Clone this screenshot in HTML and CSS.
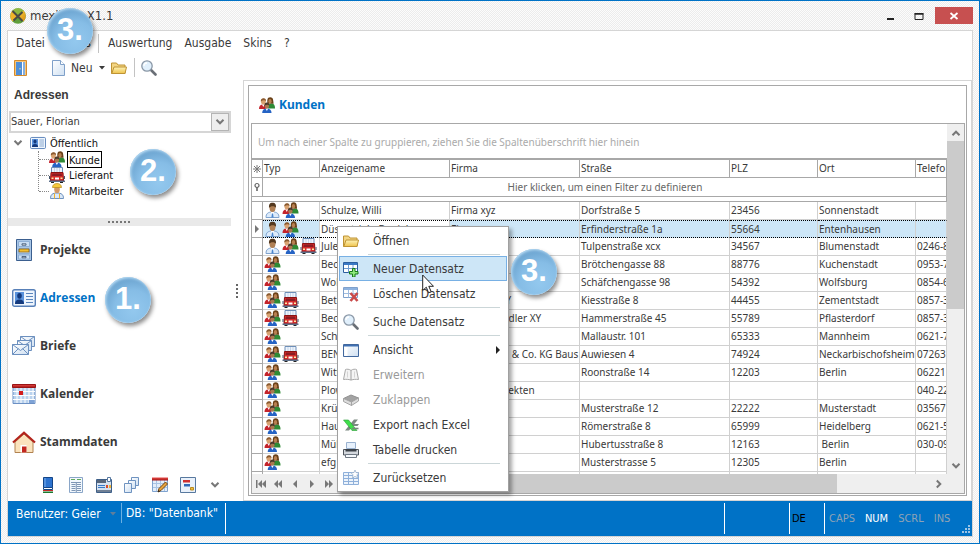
FILE: index.html
```html
<!doctype html>
<html lang="de">
<head>
  <meta charset="utf-8">
  <title>mexikon X1.1</title>
  <link rel="stylesheet" href="styles.css">
</head>
<body>
<svg class="defs" aria-hidden="true">
  <defs>
    <linearGradient id="g-globe" x1="0" y1="0" x2="1" y2="1"><stop offset="0" stop-color="#f7d23a"/><stop offset="1" stop-color="#d98a16"/></linearGradient>
    <linearGradient id="g-folder" x1="0" y1="0" x2="0" y2="1"><stop offset="0" stop-color="#fdf3b8"/><stop offset="1" stop-color="#efc34c"/></linearGradient>
    <linearGradient id="g-paper" x1="0" y1="0" x2="1" y2="1"><stop offset="0" stop-color="#ffffff"/><stop offset="1" stop-color="#cfe0f2"/></linearGradient>
    <linearGradient id="g-red" x1="0" y1="0" x2="0" y2="1"><stop offset="0" stop-color="#e84b48"/><stop offset="1" stop-color="#a31414"/></linearGradient>
  </defs>
  <symbol id="people" viewBox="0 0 16 16">
    <path d="M8.500 11c0-3 1.500-4.500 4-4.500s3.500 2 3.500 4.500v.6H8.500z" fill="#2f8a35"/>
    <path d="M8.300 6.500V3.200C8.500.8 9.800.2 11.300.2s2.900.8 2.900 3.200l.4 3.400z" fill="#6a4118"/>
    <ellipse cx="11" cy="4.300" rx="1.600" ry="2.200" fill="#b98052"/>
    <path d="M0 12c0-3 1.200-4.500 3.800-4.500S8 9 8 12z" fill="#c4232b"/>
    <path d="M3 7.600h2.600L4.300 10z" fill="#fff"/>
    <ellipse cx="4.400" cy="4.600" rx="2.400" ry="3" fill="#d9a270"/>
    <path d="M1.800 4.500C1.600 2 3 1.200 4.600 1.200S7.200 2 7 4.300C6 3 4 3 1.800 4.500z" fill="#8a5a30"/>
    <path d="M3.200 16c0-3 1.500-4.600 4.600-4.600s4.700 1.600 4.700 4.600z" fill="#2563c4"/>
    <path d="M6.500 11.500h2.800l-1.400 2.400z" fill="#fff"/>
    <ellipse cx="7.900" cy="8.800" rx="2.200" ry="2.700" fill="#a87a50"/>
    <path d="M5.400 9C5.200 6.300 6.400 5.400 7.900 5.400s2.700.9 2.500 3.400C9.400 7.400 6.800 7.400 5.400 9z" fill="#4c3a2c"/>
  </symbol>
  <symbol id="person" viewBox="0 0 16 16">
    <path d="M1.500 15.500c0-4 2-5.500 6.500-5.500s6.500 1.500 6.500 5.500z" fill="#dcebfb" stroke="#7fa3cf"/>
    <path d="M6 10h4l-2 2.500z" fill="#fff"/>
    <path d="M7.500 11.500h1l.6 4H6.900z" fill="#4a86cf"/>
    <ellipse cx="8" cy="5.800" rx="3" ry="4.200" fill="#b08055"/>
    <path d="M4.500 6C4.200 2 5.500.7 8 .7S11.800 2 11.500 6C10.500 3.600 6 3.600 4.500 6z" fill="#54391f"/>
  </symbol>
  <symbol id="truck" viewBox="0 0 16 16">
    <path d="M2.500.500h11v5h-11z" fill="#eef4fc" stroke="#6e8fb8"/>
    <path d="M5.500 1v4M8 1v4M10.500 1v4" stroke="#c4d5ea"/>
    <path d="M2 5.500h12l.5 8.500h-13z" fill="#d42a2a" stroke="#8a1212"/>
    <path d="M3.500 6.500h9l.5 2.500H3z" fill="#8a1d24"/>
    <path d="M6 10.500h4v2H6z" fill="#fff"/>
    <path d="M2.500 10.500h2v1.500h-2zM11.500 10.500h2v1.500h-2z" fill="#ffe9a0"/>
    <path d="M0 13.500h16V15H0z" fill="#5c6f8a"/>
    <path d="M0 9h1v3H0zM15 9h1v3h-1z" fill="#44566e"/>
    <path d="M2 15h3v1H2zM11 15h3v1h-3z" fill="#222"/>
  </symbol>
  <symbol id="worker" viewBox="0 0 16 16">
    <path d="M1.500 15.500c0-4 2-5.500 6.500-5.500s6.500 1.500 6.500 5.500z" fill="#dbe9f8" stroke="#6e92bf"/>
    <path d="M5.500 10.500v5M10.500 10.500v5" stroke="#f0b22a"/>
    <ellipse cx="8" cy="6.200" rx="2.800" ry="3.900" fill="#d39a68"/>
    <path d="M3.500 4.500h9c0-2.700-2-4-4.500-4s-4.500 1.300-4.500 4z" fill="#f7c93c" stroke="#b98a1a" stroke-width=".7"/>
  </symbol>
  <symbol id="card" viewBox="0 0 24 18">
    <rect x=".7" y=".7" width="22.600" height="16.600" rx="1.800" fill="#eef5fd" stroke="#5880b8" stroke-width="1.400"/>
    <path d="M3 3h9v12H3z" fill="#5b93dc"/>
    <ellipse cx="7.500" cy="6.800" rx="2.300" ry="2.900" fill="#14397c"/>
    <path d="M3 15c0-3 1.500-4.500 4.500-4.500S12 12 12 15z" fill="#14397c"/>
    <path d="M14 4.500h7M14 7.500h7M14 10.500h7M14 13.500h7" stroke="#5c86bd"/>
  </symbol>
  <symbol id="cabinet" viewBox="0 0 16 22">
    <path d="M.5.500h15v21H.5z" fill="#a9c6e6" stroke="#3b5f8f"/>
    <path d="M2.500 2.500h11v5h-11zM2.500 9.500h11v5h-11zM2.500 16h11v4h-11z" fill="#c9def4" stroke="#8fb0d6"/>
    <path d="M3 10h10v3H3z" fill="#f3bf2e" stroke="#8a641a" stroke-width=".8"/>
    <path d="M6 6.200V4.800h4v1.400zM6 18.800v-1.300h4v1.300z" fill="#fff" stroke="#2c4568" stroke-width=".8"/>
  </symbol>
  <symbol id="letters" viewBox="0 0 24 20">
    <g fill="url(#g-paper)" stroke="#6c90bf">
      <path d="M8.500.500h14v10h-14z"/><path d="M8.500.500l7 5 7-5" fill="none"/>
      <path d="M5.500 4.500h14v10h-14z"/><path d="M5.500 4.500l7 5 7-5" fill="none"/>
      <path d="M.5 8.500h16v10H.5z"/><path d="M.5 18.500l6-6M16.500 18.500l-6-6M.5 8.500l8 6 8-6" fill="none"/>
    </g>
  </symbol>
  <symbol id="calendar" viewBox="0 0 24 20">
    <path d="M1 3h22v16.500H1z" fill="#b9d2ee" stroke="#6c90c4"/>
    <path d="M5 4v15M9 4v15M13 4v15M17 4v15M21 4v15M1 7.500h22M1 11.500h22M1 15.500h22" stroke="#fff"/>
    <path d="M17 16h5v3h-5z" fill="#7fa3d6"/>
    <path d="M.5.500h23v3H.5z" fill="url(#g-red)" stroke="#9b1515"/>
    <path d="M7 7h4v4H7z" fill="#d31d1d"/>
  </symbol>
  <symbol id="house" viewBox="0 0 24 22">
    <path d="M3 11l9-8 9 8v10.500H3z" fill="#fbe3bd" stroke="#b18250"/>
    <path d="M1 11.500L12 1.700l11 9.800" fill="none" stroke="#b3241c" stroke-width="2.200"/>
    <path d="M8.500 21.500v-7.500h6v7.500z" fill="#fff"/>
    <path d="M10 21.500V15.500h4.500v6z" fill="#c2271f"/>
  </symbol>
  <symbol id="folder" viewBox="0 0 16 16">
    <path d="M.5 13.500v-10.500h5l1.500 2h7v8.500z" fill="#f3d583" stroke="#bf9434"/>
    <path d="M.8 13.500l2.200-6.500h12.500l-1.500 6.500z" fill="url(#g-folder)" stroke="#bf9434"/>
  </symbol>
  <symbol id="lens" viewBox="0 0 16 16">
    <path d="M9.500 9.500l5 5" stroke="#6a6f76" stroke-width="2.600" stroke-linecap="round"/>
    <circle cx="6" cy="6" r="5.200" fill="#e1f0fc" stroke="#8a97a6" stroke-width="1.300"/>
    <path d="M3 6a3 3 0 0 1 3-3" fill="none" stroke="#fff" stroke-width="1.300"/>
  </symbol>
  <symbol id="door" viewBox="0 0 13 16">
    <path d="M.5.500h12v15H.5z" fill="#f6c478" stroke="#d58b2b"/>
    <path d="M2 2h9v13H2z" fill="#4f8fd8"/>
    <path d="M8 2h1v13H8z" fill="#fff"/>
    <path d="M9 2h2v13H9z" fill="#83aee0"/>
    <path d="M5.500 8h1v1.500h-1z" fill="#ffe48a"/>
  </symbol>
  <symbol id="page" viewBox="0 0 13 16">
    <path d="M.5.500h8l4 4v11H.5z" fill="url(#g-paper)" stroke="#7fa0c9"/>
    <path d="M8.500.500v4h4" fill="#fff" stroke="#7fa0c9"/>
  </symbol>
  <symbol id="grid-add" viewBox="0 0 16 16">
    <path d="M.5 1.500h14v10H.5z" fill="#fff" stroke="#2d5f9f"/><path d="M1 2h13v2H1z" fill="#3a79c4"/>
    <path d="M1 7.500h13M5.500 4v7.500M10 4v7.500" stroke="#6e9bd0"/>
    <path d="M9.500 7.500h2.500v3h3v2.500h-3v3H9.500v-3h-3v-2.500h3z" fill="#8fe87c" stroke="#167a16"/>
  </symbol>
  <symbol id="grid-del" viewBox="0 0 16 16">
    <path d="M.5 1.500h14v10H.5z" fill="#fff" stroke="#7fa1cc"/><path d="M1 2h13v2H1z" fill="#8db2df"/>
    <path d="M1 7.500h13M5.500 4v7.500M10 4v7.500" stroke="#9fbde0"/>
    <path d="M7.500 7l7 8M14.500 7l-7 8" stroke="#c94a4a" stroke-width="2.600"/>
  </symbol>
  <symbol id="grid-new" viewBox="0 0 16 16">
    <path d="M.5 2.500h15v12H.5z" fill="#edf4fc" stroke="#8fb0da"/>
    <path d="M1 5.500h14M1 8.500h14M1 11.500h14M5.500 3v11M10.500 3v11" stroke="#8fb0da"/>
    <path d="M12 0l1 2.500 3 .3-2 2 .6 3-2.600-1.400-2.600 1.400.6-3-2-2 3-.3z" fill="#fff" stroke="#8fa9c6" stroke-width=".7"/>
  </symbol>
  <symbol id="view" viewBox="0 0 16 16">
    <path d="M.5 2.500h15v12H.5z" fill="url(#g-paper)" stroke="#41689e"/><path d="M1 3h14v1.500H1z" fill="#3f70b3"/>
    <path d="M1.500 5h3v9h-3z" fill="#fff"/>
  </symbol>
  <symbol id="book-open" viewBox="0 0 16 16">
    <path d="M8 3.500C6.500 2 3.500 2 2.500 2.500L.5 12.500c2.500-.3 5-.3 7.500.6 2.500-.9 5-.9 7.500-.6L13.500 2.500C12.500 2 9.500 2 8 3.500z" fill="#f4f4f4" stroke="#a9a9a9"/>
    <path d="M8 3.500v9.500" stroke="#a0a0a0"/>
    <path d="M4.500 4.500v6M11.500 4.500v6" stroke="#d5d5d5"/>
  </symbol>
  <symbol id="book-shut" viewBox="0 0 16 16">
    <path d="M.5 6.500L8 3l7.500 3-7 4z" fill="#a3a3a3" stroke="#8f8f8f"/>
    <path d="M.5 6.500v3l8 4v-3.500zM15.500 6v3l-7 4.500v-3.500z" fill="#ddd" stroke="#a5a5a5"/>
  </symbol>
  <symbol id="excel" viewBox="0 0 16 16">
    <path d="M15 2.500H11L2 13.500h4z" fill="#7d8a82"/><path d="M9 7h7l-1.500 2H9z" fill="#7d8a82"/>
    <path d="M.5 3h5l8.500 10.500H9z" fill="#3fe04b" stroke="#2a9a36" stroke-width=".6"/>
    <path d="M9 11.500h6.500" stroke="#78877c" stroke-width="1.600"/>
  </symbol>
  <symbol id="printer" viewBox="0 0 16 16">
    <path d="M3.500.500h9v6h-9z" fill="#e7f1fc" stroke="#9ab2d0"/>
    <path d="M.5 7.500h15v5.500H.5z" fill="#d4d8de" stroke="#4f555d"/><path d="M2.500 7h11v2.500h-11z" fill="#3a4047"/>
    <path d="M2.500 12.500h11v3h-11z" fill="#f6f9fd" stroke="#707984"/>
  </symbol>
  <symbol id="book" viewBox="0 0 16 16">
    <path d="M3.500.500h9v10h-9z" fill="#2d73cf" stroke="#134587"/><path d="M5 1v9" stroke="#7db0ee"/>
    <path d="M3.500 10.500h9v2h-9z" fill="#fff" stroke="#134587"/>
    <path d="M3 13h10v1H3z" fill="#c12a2a"/><path d="M3 14.500h10V16H3z" fill="#1c7a30"/>
  </symbol>
  <symbol id="form" viewBox="0 0 16 16">
    <path d="M1.500.500h13v15h-13z" fill="#f3f8fd" stroke="#8aa6c8"/>
    <path d="M3 2.500h4M9 2.500h4" stroke="#62a95e"/><path d="M3 5.500h10M3.500 7.500h4M9 7.500h4M3.500 9.500h4M9 9.500h4M3.500 11.500h4M9 11.500h4M3.500 13.500h4M9 13.500h4M8.300 5v10" stroke="#7f97b5"/>
  </symbol>
  <symbol id="register" viewBox="0 0 16 16">
    <path d="M.5 2.500h15v13H.5z" fill="#d4e1f0" stroke="#3e5f88"/><path d="M1 3h9v3H1z" fill="#56657a"/>
    <path d="M11.500.500h3v4h-3z" fill="#fff" stroke="#55779f"/>
    <path d="M2 8.500h7M2 10.500h7" stroke="#3979c8"/><path d="M10 8h2v3h-2z" fill="#d54a2e"/><path d="M13 8h2v3h-2z" fill="#edb43a"/>
    <path d="M1 13h14v2H1z" fill="#6f7f94"/>
  </symbol>
  <symbol id="stack" viewBox="0 0 16 16">
    <g fill="url(#g-paper)" stroke="#6f93c0">
      <path d="M7.500.500h7v8h-7z"/><path d="M4.500 3.500h7v8h-7z"/><path d="M.5 6.500h7v9h-7z"/>
    </g>
  </symbol>
  <symbol id="plan" viewBox="0 0 16 16">
    <path d="M.5 2.500h15v12H.5z" fill="#e4eefa" stroke="#7fa3cf"/><path d="M4.500 3v11M8.500 3v11M12.500 3v11M1 6.500h14M1 10.500h14" stroke="#a9c4e4"/>
    <path d="M0 .5h16v3H0z" fill="url(#g-red)"/>
    <path d="M6 15l1-3.500L13.500 5l2 2L9 13.500z" fill="#e7a33c" stroke="#6f4310"/><path d="M6 15l.6-2 1.400 1.400z" fill="#222"/>
  </symbol>
  <symbol id="sheet" viewBox="0 0 16 16">
    <path d="M.5.500h15v15H.5z" fill="#e9f1fb" stroke="#58799f"/><path d="M3 3h7v2.500H3z" fill="#cf2f2f"/><path d="M4 7h6v2.500H4z" fill="#2e68b8"/><path d="M10.500 10.500h3v2.500h-3z" fill="#f0bd3a" stroke="#b88a20"/>
  </symbol>
  <symbol id="down" viewBox="0 0 10 10"><path d="M1.500 2.800L5 6.300l3.500-3.500" fill="none" stroke="currentColor" stroke-width="2"/></symbol>
  <symbol id="up" viewBox="0 0 10 10"><path d="M1.500 7.200L5 3.700l3.500 3.500" fill="none" stroke="currentColor" stroke-width="2"/></symbol>
  <symbol id="right" viewBox="0 0 10 10"><path d="M2.800 1.500L6.300 5 2.800 8.500" fill="none" stroke="currentColor" stroke-width="2"/></symbol>
  <symbol id="play" viewBox="0 0 10 10"><path d="M3 1l4 4-4 4z" fill="currentColor"/></symbol>
  <symbol id="caret" viewBox="0 0 6 4"><path d="M0 0h6L3 3.500z" fill="currentColor"/></symbol>
</svg>

<div class="window">
  <header class="titlebar">
    <svg class="logo" viewBox="0 0 16 16"><circle cx="8" cy="8" r="7.800" fill="#5f9e3a"/><path d="M8 8L2.500 2.500A7.800 7.800 0 0 1 13.500 2.500z" fill="#8db83f"/><path d="M8 8l5.500-5.500a7.800 7.800 0 0 1 0 11z" fill="url(#g-globe)"/><path d="M8 8L2.500 2.500a7.800 7.800 0 0 0 0 11z" fill="#f0b429"/><path d="M2.500 3l10 10M3.500 12.500L12.500 4" stroke="#4a4a44" stroke-width="2"/></svg>
    <span class="caption">mexikon&nbsp; X1.1</span>
    <button class="win-btn" aria-label="Minimieren"><svg viewBox="0 0 10 10"><path d="M1 7h7v2H1z" fill="#222"/></svg></button>
    <button class="win-btn" aria-label="Maximieren"><svg viewBox="0 0 10 10"><path d="M1 2.500h8v6H1zM1 3h8" fill="none" stroke="#222"/><path d="M.5 2h9v1.500h-9z" fill="#222"/></svg></button>
    <button class="win-btn close" aria-label="Schließen"><svg viewBox="0 0 10 10"><path d="M1.500 2l7 6M8.500 2l-7 6" stroke="#fff" stroke-width="1.800"/></svg></button>
  </header>

  <div class="frame">
    <nav class="menubar">
      <button>Datei</button><button>Extras</button><span class="vline"></span>
      <button>Auswertung</button><button>Ausgabe</button><button>Skins</button><button>?</button>
    </nav>
    <div class="toolbar">
      <button class="exit" aria-label="Beenden"><svg class="narrow"><use href="#door"/></svg></button>
      <button class="new"><svg class="narrow"><use href="#page"/></svg>Neu<svg class="caret"><use href="#caret"/></svg></button>
      <button aria-label="Öffnen"><svg class="icon"><use href="#folder"/></svg></button>
      <span class="vline"></span>
      <button aria-label="Suchen"><svg class="icon"><use href="#lens"/></svg></button>
    </div>

    <div class="work">
      <aside class="side">
        <h2>Adressen</h2>
        <div class="combo">
          <select aria-label="Benutzer"><option>Sauer, Florian</option></select>
          <span class="combo-arrow"><svg class="glyph"><use href="#down"/></svg></span>
        </div>
        <ul class="tree">
          <li class="root"><svg class="glyph"><use href="#down"/></svg><svg class="icon card"><use href="#card"/></svg><span>Öffentlich</span></li>
          <li><svg class="icon"><use href="#people"/></svg><span class="focus">Kunde</span></li>
          <li><svg class="icon"><use href="#truck"/></svg><span>Lieferant</span></li>
          <li><svg class="icon"><use href="#worker"/></svg><span>Mitarbeiter</span></li>
        </ul>
        <div class="splitter"></div>
        <nav class="modules">
          <a href="#"><svg><use href="#cabinet"/></svg>Projekte</a>
          <a href="#" class="active"><svg><use href="#card"/></svg>Adressen</a>
          <a href="#"><svg><use href="#letters"/></svg>Briefe</a>
          <a href="#"><svg><use href="#calendar"/></svg>Kalender</a>
          <a href="#"><svg><use href="#house"/></svg>Stammdaten</a>
        </nav>
        <div class="shortcuts">
          <button aria-label="Buch"><svg class="icon"><use href="#book"/></svg></button>
          <button aria-label="Formular"><svg class="icon"><use href="#form"/></svg></button>
          <button aria-label="Kasse"><svg class="icon"><use href="#register"/></svg></button>
          <button aria-label="Kopien"><svg class="icon"><use href="#stack"/></svg></button>
          <button aria-label="Planer"><svg class="icon"><use href="#plan"/></svg></button>
          <button aria-label="Blatt"><svg class="icon"><use href="#sheet"/></svg></button>
          <button aria-label="Mehr"><svg class="glyph"><use href="#down"/></svg></button>
        </div>
      </aside>
      <div class="side-grip"></div>

      <main class="panel">
        <section class="box">
          <h1><svg class="icon"><use href="#people"/></svg>Kunden</h1>
          <div class="grid">
            <div class="grid-main">
              <div class="grid-view">
                <p class="group-hint">Um nach einer Spalte zu gruppieren, ziehen Sie die Spaltenüberschrift hier hinein</p>
                <table>
                  <colgroup><col class="c-ind"><col class="c-typ"><col class="c-name"><col class="c-firma"><col class="c-str"><col class="c-plz"><col class="c-ort"><col></colgroup>
                  <thead>
                    <tr><th class="ind"><svg class="glyph" viewBox="0 0 10 10"><path d="M5 1v8M1 5h8M2 2l6 6M8 2L2 8" stroke="#777"/></svg></th><th>Typ</th><th>Anzeigename</th><th>Firma</th><th>Straße</th><th>PLZ</th><th>Ort</th><th>Telefo</th></tr>
                    <tr class="filter"><td class="ind"><svg class="glyph" viewBox="0 0 10 10"><circle cx="5" cy="3.500" r="2" fill="none" stroke="#666" stroke-width="1.200"/><path d="M5 5v4" stroke="#666" stroke-width="1.600"/></svg></td><td colspan="7">Hier klicken, um einen Filter zu definieren</td></tr>
                    <tr class="gap"><td colspan="8"></td></tr>
                  </thead>
                  <tbody>
                    <tr><td></td><td><svg class="icon"><use href="#person"/></svg><svg class="icon"><use href="#people"/></svg></td><td>Schulze, Willi</td><td>Firma xyz</td><td>Dorfstraße 5</td><td>23456</td><td>Sonnenstadt</td><td></td></tr>
                    <tr class="selected"><td><svg class="glyph"><use href="#play"/></svg></td><td><svg class="icon"><use href="#person"/></svg><svg class="icon"><use href="#people"/></svg></td><td>Düsentrieb, Daniel</td><td>Firma</td><td>Erfinderstraße 1a</td><td>55664</td><td>Entenhausen</td><td></td></tr>
                    <tr><td></td><td><svg class="icon"><use href="#person"/></svg><svg class="icon"><use href="#people"/></svg><svg class="icon"><use href="#truck"/></svg></td><td>Jules</td><td></td><td>Tulpenstraße xcx</td><td>34567</td><td>Blumenstadt</td><td>0246-8</td></tr>
                    <tr><td></td><td><svg class="icon"><use href="#people"/></svg></td><td>Becker</td><td></td><td>Brötchengasse 88</td><td>88776</td><td>Kuchenstadt</td><td>0953-7</td></tr>
                    <tr><td></td><td><svg class="icon"><use href="#people"/></svg></td><td>Wolf</td><td></td><td>Schäfchengasse 98</td><td>54392</td><td>Wolfsburg</td><td>0854-6</td></tr>
                    <tr><td></td><td><svg class="icon"><use href="#people"/></svg><svg class="icon"><use href="#truck"/></svg></td><td>Beton</td><td>Betonbau XY</td><td>Kiesstraße 8</td><td>44455</td><td>Zementstadt</td><td>0857-3</td></tr>
                    <tr><td></td><td><svg class="icon"><use href="#people"/></svg><svg class="icon"><use href="#truck"/></svg></td><td>Becker</td><td>Baustoffhändler XY</td><td>Hammerstraße 45</td><td>55789</td><td>Pflasterdorf</td><td>0857-3</td></tr>
                    <tr><td></td><td><svg class="icon"><use href="#people"/></svg></td><td>Schmidt</td><td></td><td>Mallaustr. 101</td><td>65333</td><td>Mannheim</td><td>0621-7</td></tr>
                    <tr><td></td><td><svg class="icon"><use href="#people"/></svg><svg class="icon"><use href="#truck"/></svg></td><td>BENZ</td><td>BENZ GmbH &amp; Co. KG Baus</td><td>Auwiesen 4</td><td>74924</td><td>Neckarbischofsheim</td><td>07263</td></tr>
                    <tr><td></td><td><svg class="icon"><use href="#people"/></svg></td><td>Witt</td><td></td><td>Roonstraße 14</td><td>12203</td><td>Berlin</td><td>06221</td></tr>
                    <tr><td></td><td><svg class="icon"><use href="#people"/></svg></td><td>Plow</td><td>Plows Architekten</td><td></td><td></td><td></td><td>040-22</td></tr>
                    <tr><td></td><td><svg class="icon"><use href="#people"/></svg></td><td>Krüger</td><td></td><td>Musterstraße 12</td><td>22222</td><td>Musterstadt</td><td>03567</td></tr>
                    <tr><td></td><td><svg class="icon"><use href="#people"/></svg></td><td>Hauser</td><td></td><td>Römerstraße 8</td><td>65999</td><td>Heidelberg</td><td>0621-5</td></tr>
                    <tr><td></td><td><svg class="icon"><use href="#people"/></svg></td><td>Müller</td><td></td><td>Hubertusstraße 8</td><td>12163</td><td>&nbsp;Berlin</td><td>030-09</td></tr>
                    <tr><td></td><td><svg class="icon"><use href="#people"/></svg></td><td>efg</td><td></td><td>Musterstrasse 5</td><td>12305</td><td>Berlin</td><td></td></tr>
                    <tr><td></td><td></td><td></td><td></td><td></td><td></td><td></td><td></td></tr>
                  </tbody>
                </table>
              </div>
              <div class="vscroll">
                <button aria-label="Nach oben"><svg class="glyph"><use href="#up"/></svg></button>
                <div class="thumb"></div>
                <button aria-label="Nach unten"><svg class="glyph"><use href="#down"/></svg></button>
              </div>
            </div>
            <div class="navigator">
              <button aria-label="Erster"><svg viewBox="0 0 10 10"><path d="M0 1h1.500v8H0zM6 1v8L2 5zM10 1v8L6 5z" fill="#777"/></svg></button>
              <button aria-label="Seite zurück"><svg viewBox="0 0 10 10"><path d="M5 1v8L1 5zM9 1v8L5 5z" fill="#777"/></svg></button>
              <button aria-label="Zurück"><svg viewBox="0 0 10 10"><path d="M7 1v8L3 5z" fill="#777"/></svg></button>
              <button aria-label="Weiter"><svg viewBox="0 0 10 10"><path d="M3 1v8l4-4z" fill="#777"/></svg></button>
              <button aria-label="Seite vor"><svg viewBox="0 0 10 10"><path d="M1 1v8l4-4zM5 1v8l4-4z" fill="#777"/></svg></button>
              <div class="hscroll"><div class="thumb"></div><button aria-label="Nach rechts"><svg class="glyph"><use href="#right"/></svg></button></div>
            </div>
          </div>
        </section>
      </main>
    </div>

    <footer class="status">
      <div class="user"><span>Benutzer: Geier</span><svg class="caret"><use href="#caret"/></svg></div>
      <div class="db">DB: "Datenbank"</div>
      <div class="fill"></div>
      <div class="cell"></div>
      <div class="lang">DE</div>
      <div class="keys"><span>CAPS</span><span class="on">NUM</span><span>SCRL</span><span>INS</span></div>
      <svg class="sizer" viewBox="0 0 9 9"><path d="M7 1h2M4 4h2M7 4h2M1 7h2M4 7h2M7 7h2" stroke="#9cc4e6" stroke-width="2"/></svg>
    </footer>
  </div>
</div>

<div class="context">
  <button><svg class="icon"><use href="#folder"/></svg>Öffnen</button>
  <hr>
  <button class="hot"><svg class="icon"><use href="#grid-add"/></svg>Neuer Datensatz</button>
  <button><svg class="icon"><use href="#grid-del"/></svg>Löschen Datensatz</button>
  <hr>
  <button><svg class="icon"><use href="#lens"/></svg>Suche Datensatz</button>
  <hr>
  <button><svg class="icon"><use href="#view"/></svg>Ansicht<svg class="glyph sub"><use href="#play"/></svg></button>
  <button disabled><svg class="icon"><use href="#book-open"/></svg>Erweitern</button>
  <button disabled><svg class="icon"><use href="#book-shut"/></svg>Zuklappen</button>
  <button><svg class="icon"><use href="#excel"/></svg>Export nach Excel</button>
  <button><svg class="icon"><use href="#printer"/></svg>Tabelle drucken</button>
  <hr>
  <button><svg class="icon"><use href="#grid-new"/></svg>Zurücksetzen</button>
</div>
<svg class="pointer" viewBox="0 0 12 20"><path d="M.7 1v15.500l3.600-3.300 2.300 5.600 2.600-1.100-2.400-5.400h4.700z" fill="#fff" stroke="#222"/></svg>

<span class="badge step-menu">3.</span>
<span class="badge step-tree">2.</span>
<span class="badge step-module">1.</span>
<span class="badge step-context">3.</span>
</body>
</html>
```
FILE: styles.css
```css
* {
  box-sizing: border-box;
}
body {
  margin: 0;
  background: #fff;
  color: #3a3a3a;
  font: 11px/16px "DejaVu Sans Condensed", "Noto Sans", sans-serif;
}
button {
  display: flex;
  align-items: center;
  margin: 0;
  padding: 0;
  border: 0;
  background: none;
  color: inherit;
  font: inherit;
}
h1, h2, p, ul {
  margin: 0;
  padding: 0;
}
svg {
  display: block;
  flex: none;
}
.defs {
  position: absolute;
  width: 0;
  height: 0;
}
.icon {
  width: 16px;
  height: 16px;
}
.glyph {
  width: 10px;
  height: 10px;
  color: #777;
}
.narrow {
  width: 13px;
  height: 16px;
}
.caret {
  width: 6px;
  height: 4px;
}
.vline {
  width: 1px;
  height: 19px;
  background: #c3c3c3;
}

/* window */
.window {
  display: flex;
  flex-direction: column;
  height: 100vh;
  padding: 0 6px 6px;
  border: 1px solid #0072c6;
  background: conic-gradient(#ececec 25%, #fcfcfc 0 50%, #ececec 0 75%, #fcfcfc 0) 0 0 / 2px 2px;
}
.titlebar {
  display: flex;
  align-items: center;
  height: 29px;
  padding-left: 3px;
}
.logo {
  width: 16px;
  height: 16px;
}
.caption {
  flex: 1;
  padding-left: 4px;
  font-size: 13px;
}
.win-btn {
  justify-content: center;
  width: 28px;
  height: 17px;
}
.win-btn svg {
  width: 10px;
  height: 10px;
}
.close {
  width: 38px;
  margin-left: 2px;
  background: #c75050;
}
.frame {
  display: flex;
  flex: 1;
  flex-direction: column;
  min-height: 0;
  border: 1px solid #d5d5d5;
  background: #fff;
}
.menubar, .toolbar {
  display: flex;
  align-items: center;
  height: 24px;
  font-size: 12px;
}
.menubar {
  gap: 12px;
  padding-left: 8px;
}
.menubar .vline {
  margin: 0 -3px 0 -5px;
}
.toolbar {
  height: 25px;
  padding-left: 6px;
}
.new {
  margin: 0 6px 0 25px;
}
.new .narrow {
  margin-right: 6px;
}
.new .caret {
  margin-left: 6px;
}
.toolbar .vline {
  margin: 0 6px 0 7px;
}
.work {
  display: flex;
  flex: 1;
  min-height: 0;
}

/* left side */
.side {
  display: flex;
  flex-direction: column;
  width: 223px;
}
.side h2 {
  padding: 7px 6px 0;
  font: bold 12px/16px "Liberation Sans", Arial, sans-serif;
}
.combo {
  display: flex;
  height: 22px;
  margin: 8px 0 2px 1px;
  border: 2px solid #d6d6d6;
}
.combo select {
  flex: 1;
  padding: 0;
  border: 0;
  appearance: none;
  background: #fff;
  color: #3a3a3a;
  font: inherit;
}
.combo-arrow {
  display: flex;
  align-items: center;
  justify-content: center;
  width: 18px;
  border: 1px solid #b4b4b4;
  background: #eee;
}
.tree {
  position: relative;
  list-style: none;
  color: #111;
}
.tree::before {
  content: "";
  position: absolute;
  top: 16px;
  left: 30px;
  height: 40px;
  border-left: 1px dotted #888;
}
.tree li {
  display: flex;
  align-items: center;
  height: 16px;
  padding-left: 41px;
}
.tree li::before {
  content: "";
  width: 10px;
  margin-left: -10px;
  border-top: 1px dotted #888;
}
.tree .root {
  padding-left: 5px;
}
.tree .root::before {
  display: none;
}
.tree .card {
  margin: 0 2px 0 7px;
}
.tree span {
  padding: 2px 2px 0;
}
.tree li + li span {
  margin-left: 2px;
}
.tree .focus {
  outline: 1px solid #000;
  outline-offset: -1px;
  line-height: 15px;
}
.splitter {
  display: flex;
  align-items: center;
  justify-content: center;
  height: 8px;
  margin-top: 19px;
  background: #e9e9e9;
}
.splitter::before {
  content: "";
  width: 23px;
  height: 2px;
  background: repeating-linear-gradient(90deg, #777 0 2px, transparent 2px 4px);
}
.modules a {
  display: flex;
  align-items: center;
  gap: 4px;
  height: 48px;
  padding-left: 4px;
  color: #3a3a3a;
  font: bold 12px/16px "Open Sans", "Noto Sans", sans-serif;
  text-decoration: none;
}
.modules svg {
  width: 24px;
  height: 22px;
}
.modules .active {
  color: #0072c6;
}
.shortcuts {
  display: flex;
  gap: 12px;
  margin: auto 0 8px;
  padding-left: 32px;
}
.shortcuts .glyph {
  margin-left: 2px;
}
.side-grip {
  display: flex;
  align-items: center;
  justify-content: center;
  width: 12px;
}
.side-grip::before {
  content: "";
  width: 2px;
  height: 14px;
  background: repeating-linear-gradient(#666 0 2px, transparent 2px 4px);
}

/* record grid */
.panel {
  display: flex;
  flex: 1;
  min-width: 0;
  padding: 4px;
  border: 1px solid #d5d5d5;
}
.box {
  display: flex;
  flex: 1;
  flex-direction: column;
  min-width: 0;
  padding: 0 1px 1px 2px;
  border: 1px solid #a8a8a8;
}
.box h1 {
  display: flex;
  align-items: center;
  gap: 4px;
  height: 37px;
  padding-left: 8px;
  color: #0072c6;
  font: bold 12px/16px "Noto Sans", sans-serif;
}
.grid {
  display: flex;
  flex: 1;
  flex-direction: column;
  min-height: 0;
  border: 1px solid #a8a8a8;
  font-family: "Noto Sans", sans-serif;
  font-size: 10px;
}
.grid-main {
  display: flex;
  flex: 1;
  min-height: 0;
}
.grid-view {
  flex: 1;
  min-width: 0;
  overflow: hidden;
}
.group-hint {
  height: 36px;
  padding: 10px 6px 0;
  border-bottom: 2px solid #a8a8a8;
  color: #aaa;
}
table {
  width: 100%;
  table-layout: fixed;
  border-spacing: 0;
}
.c-ind { width: 11px; }
.c-typ { width: 57px; }
.c-name, .c-firma { width: 130px; }
.c-str { width: 150px; }
.c-plz { width: 88px; }
.c-ort { width: 98px; }
th, td {
  height: 18px;
  padding: 0 0 0 1px;
  overflow: hidden;
  border-right: 1px solid #d0d0d0;
  border-bottom: 1px solid #d0d0d0;
  font-weight: normal;
  line-height: 17px;
  text-align: left;
  white-space: nowrap;
}
th, .filter td, .gap td {
  border-color: #a8a8a8;
}
.filter td {
  height: 19px;
  color: #666;
  text-align: center;
}
.gap td {
  height: 5px;
}
tbody td:first-child {
  border-color: #a8a8a8;
}
td:first-child, th.ind {
  padding: 0;
}
td .icon {
  display: inline-block;
  width: 17px;
  height: 16px;
  margin-right: 1px;
  vertical-align: top;
}
.selected td + td {
  border-top: 1px dotted #000;
  border-bottom: 1px dotted #000;
  background: #cde6f7;
  line-height: 16px;
}
.selected td:nth-child(3) {
  background: #fff;
}
.vscroll {
  display: flex;
  flex-direction: column;
  width: 17px;
  background: #efefef;
}
.vscroll button, .hscroll button {
  justify-content: center;
  width: 17px;
  height: 17px;
}
.vscroll .thumb {
  height: 48%;
  margin-bottom: auto;
  background: #cbcbcb;
}
.navigator {
  display: flex;
  height: 19px;
  background: #efefef;
}
.navigator > button {
  justify-content: center;
  width: 17px;
}
.navigator > button > svg {
  width: 10px;
  height: 10px;
}
.hscroll {
  display: flex;
  flex: 1;
  align-items: center;
  justify-content: space-between;
  padding-right: 17px;
}
.hscroll .thumb {
  width: 82%;
  height: 100%;
  background: #cbcbcb;
}

/* status bar */
.status {
  display: flex;
  align-items: stretch;
  height: 35px;
  padding: 2px 2px 2px 8px;
  background: #0072c6;
  color: #fff;
}
.status > div {
  border-right: 1px solid #fff;
}
.user, .db {
  padding-top: 2px;
  font-size: 12px;
}
.status .user {
  display: flex;
  align-items: center;
  justify-content: space-between;
  width: 106px;
  height: 20px;
  padding: 2px 5px 0 0;
  border-color: #6bb0e2;
}
.user .caret {
  color: #5f7f9c;
}
.db {
  width: 104px;
  padding-left: 4px;
}
.fill {
  flex: 1;
}
.cell {
  width: 65px;
}
.lang {
  width: 35px;
  padding: 8px 2px;
  color: #000;
}
.status .keys {
  display: flex;
  gap: 10px;
  width: 136px;
  padding: 8px 4px;
  border: 0;
  color: #8fa3b5;
}
.keys .on {
  color: #fff;
}
.sizer {
  align-self: flex-end;
  width: 9px;
  height: 9px;
}

/* context menu and callouts */
.context {
  position: absolute;
  top: 226px;
  left: 337px;
  width: 172px;
  padding: 1px;
  border: 1px solid #a0a0a0;
  background: #fff;
  box-shadow: 3px 3px 4px rgba(0, 0, 0, .35);
  font-size: 12px;
}
.context button {
  width: 100%;
  height: 25px;
  padding: 0 3px;
  border: 1px solid transparent;
}
.context .icon {
  margin-right: 14px;
}
.context .hot {
  border-color: #78b0e4;
  background: #cde6f7;
}
.context button:disabled {
  color: #999;
}
.context .sub {
  margin-left: auto;
  color: #222;
}
.context hr {
  height: 1px;
  margin: 1px 7px 1px 29px;
  border: 0;
  background: #cbd6d8;
}
.pointer {
  position: absolute;
  top: 274px;
  left: 422px;
  width: 12px;
  height: 20px;
}
.badge {
  position: absolute;
  width: 46px;
  height: 46px;
  border-radius: 50%;
  background: radial-gradient(circle at 62% 72%, #93c8ee 0, #86bde6 45%, #6ba3cf 75%, #a5d4f4 100%);
  box-shadow: 2px 3px 4px rgba(0, 0, 0, .45), inset 1px 1px 3px #bfe1f8;
  color: #fff;
  font: bold 31px/44px "Liberation Sans", Arial, sans-serif;
  text-align: center;
}
.step-menu {
  top: 8px;
  left: 47px;
}
.step-tree {
  top: 149px;
  left: 130px;
}
.step-module {
  top: 277px;
  left: 105px;
}
.step-context {
  top: 249px;
  left: 511px;
}
```
